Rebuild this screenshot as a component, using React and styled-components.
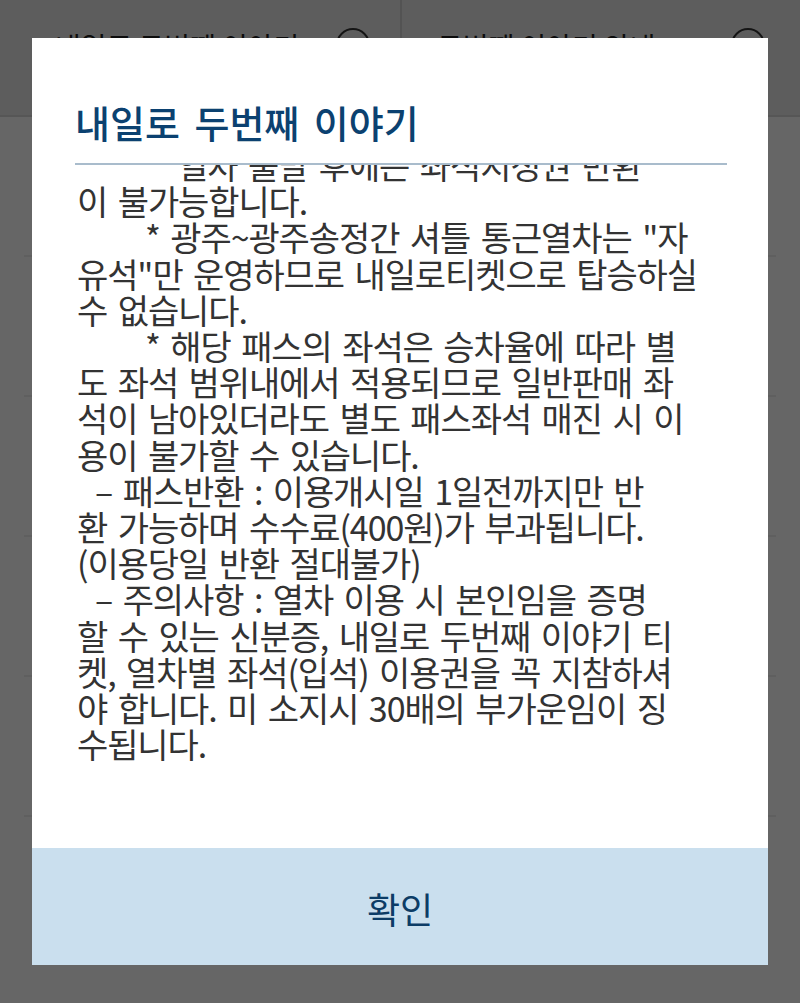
import React from "react";
import styled, { createGlobalStyle } from "styled-components";

const Global = createGlobalStyle`
  html, body { margin: 0; padding: 0; background: #fff; }
  body { font-family: "Noto Sans CJK KR", "Noto Sans", sans-serif; }
  * { box-sizing: border-box; }
`;

const Page = styled.div`
  width: 800px;
  height: 1003px;
  overflow: hidden;
  background: #fff;
`;

const TabBar = styled.div`
  display: grid;
  grid-template-columns: 1fr 1fr;
  height: 117px;
  background: #e9e9e9;
  border-bottom: 2px solid #d6d6d6;
`;

const Tab = styled.div`
  display: flex;
  align-items: flex-start;
  justify-content: space-between;
  padding: 0 ${(p) => p.$padRight}px 0 ${(p) => p.$padLeft}px;
  border-left: ${(p) => (p.$divider ? "2px solid #d0d0d0" : "none")};
  color: #222;
`;

const TabLabel = styled.span`
  margin-top: 28px;
  font-size: 28px;
  line-height: 36px;
  white-space: nowrap;
`;

const InfoCircle = styled.span`
  margin-top: 28px;
  width: 34px;
  height: 34px;
  border: 2px solid #333;
  border-radius: 50%;
  flex: none;
`;

const List = styled.div`
  padding: 0 24px;
`;

const ListRow = styled.div`
  height: 140px;
  border-bottom: 2px solid #ededed;
`;

const Overlay = styled.div`
  position: fixed;
  inset: 0;
  background: rgba(0, 0, 0, 0.6);
  display: flex;
  justify-content: center;
  align-items: flex-start;
  padding-top: 38px;
`;

const Modal = styled.div`
  width: 736px;
  background: #fff;
  display: flex;
  flex-direction: column;
`;

const TitleBar = styled.div`
  margin: 0 41px 0 43px;
  height: 127px;
  padding-top: 61px;
  border-bottom: 2px solid #a9bccc;
`;

const Title = styled.h2`
  margin: 0;
  font-size: 38px;
  line-height: 46px;
  font-weight: 500;
  word-spacing: 6px;
  color: #0b4170;
  white-space: nowrap;
`;

const Body = styled.div`
  height: 683px;
  overflow: hidden;
  padding: 0 30px 0 45px;
`;

const Text = styled.div`
  margin-top: -18px;
  font-size: 34px;
  line-height: 36.2px;
  letter-spacing: -1.1px;
  word-spacing: 4px;
  color: #333;
`;

const Line = styled.div`
  white-space: nowrap;
  padding-left: ${(p) => p.$indent || 0}px;
`;

const ConfirmButton = styled.button`
  height: 117px;
  border: none;
  background: #cadfee;
  color: #0c3c66;
  font-family: "Noto Sans CJK KR", sans-serif;
  font-size: 36px;
  padding: 2px 0 0;
  cursor: pointer;
`;

const lines = [
  { t: "열차 출발 후에는 좌석지정권 반환", i: 100 },
  { t: "이 불가능합니다." },
  { t: '* 광주~광주송정간 셔틀 통근열차는 "자', i: 68 },
  { t: '유석"만 운영하므로 내일로티켓으로 탑승하실' },
  { t: "수 없습니다." },
  { t: "* 해당 패스의 좌석은 승차율에 따라 별", i: 68 },
  { t: "도 좌석 범위내에서 적용되므로 일반판매 좌" },
  { t: "석이 남아있더라도 별도 패스좌석 매진 시 이" },
  { t: "용이 불가할 수 있습니다." },
  { t: "– 패스반환 : 이용개시일 1일전까지만 반", i: 18 },
  { t: "환 가능하며 수수료(400원)가 부과됩니다." },
  { t: "(이용당일 반환 절대불가)" },
  { t: "– 주의사항 : 열차 이용 시 본인임을 증명", i: 18 },
  { t: "할 수 있는 신분증, 내일로 두번째 이야기 티" },
  { t: "켓, 열차별 좌석(입석) 이용권을 꼭 지참하셔" },
  { t: "야 합니다. 미 소지시 30배의 부가운임이 징" },
  { t: "수됩니다." },
];

export default function App() {
  return (
    <Page>
      <Global />
      <TabBar>
        <Tab $padLeft={55} $padRight={30}>
          <TabLabel>내일로 두번째 이야기</TabLabel>
          <InfoCircle />
        </Tab>
        <Tab $padLeft={35} $padRight={35} $divider>
          <TabLabel>두번째 이야기 안내</TabLabel>
          <InfoCircle />
        </Tab>
      </TabBar>
      <List>
        <ListRow />
        <ListRow />
        <ListRow />
        <ListRow />
        <ListRow />
      </List>
      <Overlay>
        <Modal>
          <TitleBar>
            <Title>내일로 두번째 이야기</Title>
          </TitleBar>
          <Body>
            <Text>
              {lines.map((l, k) => (
                <Line key={k} $indent={l.i}>
                  {l.t}
                </Line>
              ))}
            </Text>
          </Body>
          <ConfirmButton>확인</ConfirmButton>
        </Modal>
      </Overlay>
    </Page>
  );
}
